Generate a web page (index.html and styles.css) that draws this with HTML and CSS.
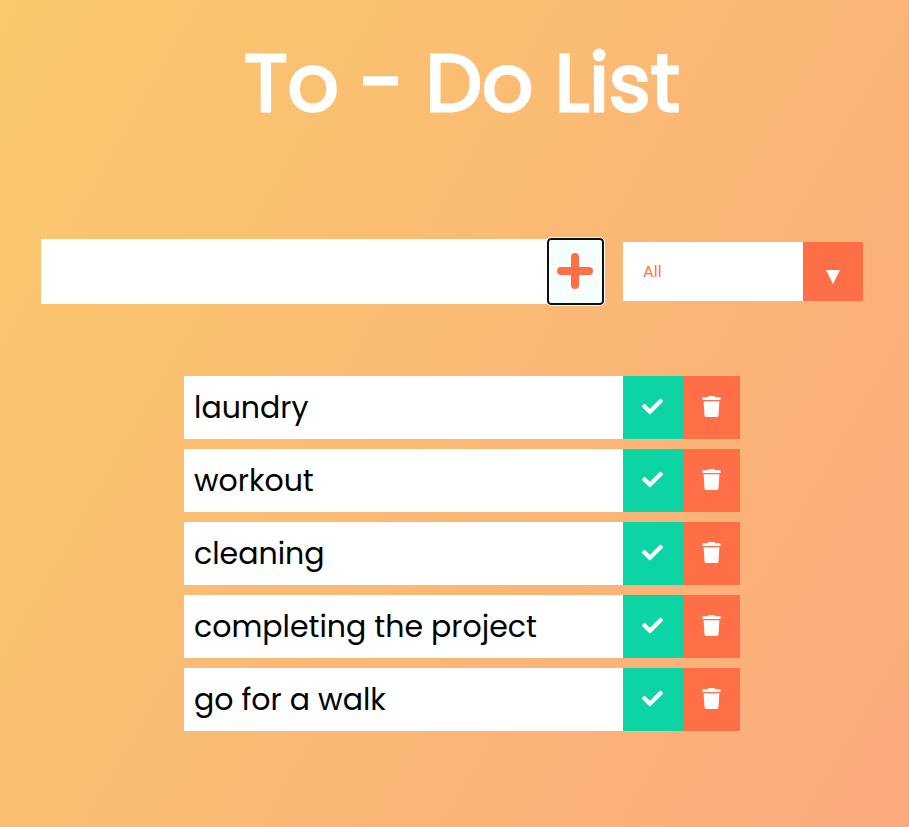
FILE: index.html
```html
<!DOCTYPE html>
<html lang="en">
<head>
<meta charset="utf-8">
<meta name="viewport" content="width=device-width, initial-scale=1">
<title>To - Do List</title>
<link rel="stylesheet" href="styles.css">
</head>
<body>
<svg class="sprite" aria-hidden="true">
  <symbol id="check" viewBox="0 0 512 512"><path d="M173.898 439.404l-166.4-166.4c-9.997-9.997-9.997-26.206 0-36.204l36.203-36.204c9.997-9.998 26.207-9.998 36.204 0L192 312.690 432.095 72.596c9.997-9.997 26.207-9.997 36.204 0l36.203 36.204c9.997 9.997 9.997 26.206 0 36.204l-294.400 294.401c-9.998 9.997-26.207 9.997-36.204-.001z"/></symbol>
  <symbol id="trash" viewBox="0 0 448 512"><path d="M432 32H312l-9.400-18.700A24 24 0 0 0 281.100 0H166.800a23.720 23.720 0 0 0-21.400 13.300L136 32H16A16 16 0 0 0 0 48v32a16 16 0 0 0 16 16h416a16 16 0 0 0 16-16V48a16 16 0 0 0-16-16zM53.200 467a48 48 0 0 0 47.900 45h245.800a48 48 0 0 0 47.900-45L416 128H32z"/></symbol>
</svg>
<header><h1>To - Do List</h1></header>
<form class="controls">
  <div class="entry">
    <input type="text" class="entry-text" aria-label="New task">
    <button type="button" class="add" aria-label="Add task">
      <svg viewBox="0 0 36 36"><path d="M18 4V32M4 18H32"/></svg>
    </button>
  </div>
  <div class="filter">
    <select aria-label="Filter tasks">
      <option>All</option>
      <option>Completed</option>
      <option>Uncompleted</option>
    </select>
    <span class="arrow" aria-hidden="true"><svg viewBox="0 0 14 14"><path d="M0 0H14L7 14Z"/></svg></span>
  </div>
</form>
<main>
  <ul class="tasks">
    <li><span>laundry</span><button class="done" aria-label="Complete"><svg><use href="#check"/></svg></button><button class="remove" aria-label="Delete"><svg><use href="#trash"/></svg></button></li>
    <li><span>workout</span><button class="done" aria-label="Complete"><svg><use href="#check"/></svg></button><button class="remove" aria-label="Delete"><svg><use href="#trash"/></svg></button></li>
    <li><span>cleaning</span><button class="done" aria-label="Complete"><svg><use href="#check"/></svg></button><button class="remove" aria-label="Delete"><svg><use href="#trash"/></svg></button></li>
    <li><span>completing the project</span><button class="done" aria-label="Complete"><svg><use href="#check"/></svg></button><button class="remove" aria-label="Delete"><svg><use href="#trash"/></svg></button></li>
    <li><span>go for a walk</span><button class="done" aria-label="Complete"><svg><use href="#check"/></svg></button><button class="remove" aria-label="Delete"><svg><use href="#trash"/></svg></button></li>
  </ul>
</main>
</body>
</html>
```
FILE: styles.css
```css
* {
  box-sizing: border-box;
  margin: 0;
  padding: 0;
}

body {
  min-height: 100vh;
  padding-left: 15px;
  font-family: Poppins, Inter, "Liberation Sans", sans-serif;
  background: linear-gradient(120deg, #f9c96b, #fcaa7d);
}

.sprite {
  display: none;
}

button,
input,
select {
  border: none;
  border-radius: 0;
  font-family: inherit;
}

button {
  cursor: pointer;
}

h1 {
  padding-top: 23px;
  text-align: center;
  font-size: 80px;
  font-weight: 400;
  line-height: 120px;
  color: white;
  -webkit-text-stroke: 3px white;
}

.controls {
  display: flex;
  align-items: center;
  gap: 19px;
  margin: 96px 46px 0 26px;
}

.entry {
  display: flex;
  flex: 1;
  min-width: 0;
  height: 65px;
}

.entry-text {
  flex: 1;
  min-width: 0;
  padding: 8px;
  font-size: 30px;
  background: white;
}

.add {
  display: grid;
  place-items: center;
  width: 57px;
  margin: -1px 0;
  padding: 0 2px 2px 0;
  background: #f5fffe;
  border: 2px solid #101010;
  border-radius: 4px;
  outline: 1px solid white;
}

.add svg {
  width: 36px;
  height: 36px;
  fill: none;
  stroke: #ff6f47;
  stroke-width: 8;
  stroke-linecap: round;
}

.filter {
  display: flex;
  flex: none;
  width: 240px;
  height: 59px;
}

select {
  appearance: none;
  flex: 1;
  min-width: 0;
  padding: 0 20px;
  font-size: 16px;
  color: #ff6f47;
  background: white;
}

.arrow {
  display: grid;
  place-items: center;
  width: 60px;
  padding-top: 10px;
  background: #ff6f47;
}

.arrow svg {
  width: 14px;
  height: 14px;
  fill: white;
}

.tasks {
  display: grid;
  gap: 10px;
  max-width: 556px;
  margin: 72px auto;
  list-style: none;
}

li {
  display: flex;
  min-height: 63px;
  background: white;
}

li span {
  flex: 1;
  padding: 0 10px;
  font-size: 30px;
  line-height: 63px;
}

li button {
  display: grid;
  place-items: center;
  padding: 0 2px 2px 0;
  color: white;
}

li svg {
  width: 21px;
  height: 21px;
  fill: currentColor;
}

.done {
  width: 61px;
  background: #0cd4a4;
}

.remove {
  width: 56px;
  background: #ff6f47;
}
```
